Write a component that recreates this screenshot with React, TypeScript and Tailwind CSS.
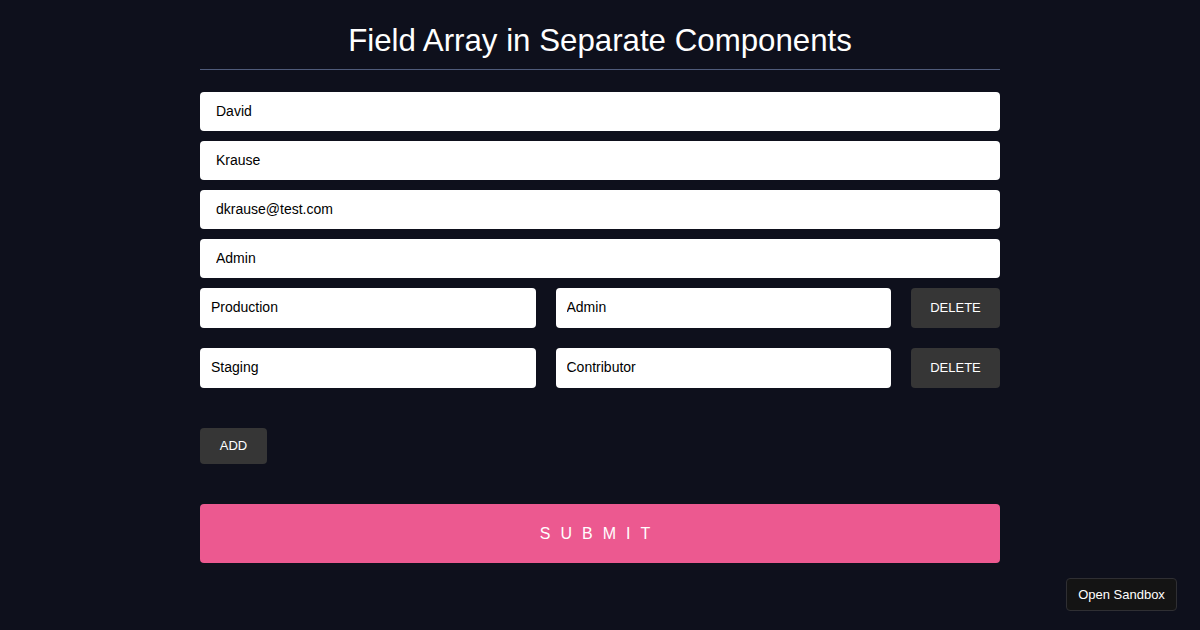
import { useState } from 'react';

type Row = { env: string; role: string };

export default function App() {
  const [rows, setRows] = useState<Row[]>([
    { env: 'Production', role: 'Admin' },
    { env: 'Staging', role: 'Contributor' },
  ]);

  const top = ['David', 'Krause', 'dkrause@test.com', 'Admin'];

  return (
    <div className="min-h-[630px] bg-[#0e101c] font-['Liberation_Sans',Arial,sans-serif]">
      <div className="w-[800px] mx-auto">
        <h1 className="pt-[22px] text-[31.25px] leading-[37px] text-white text-center font-normal">
          Field Array in Separate Components
        </h1>
        <hr className="mt-[10px] border-0 border-t border-[#4f5b7a]" />

        <form className="mt-[22px]" onSubmit={(e) => e.preventDefault()}>
          <div className="flex flex-col gap-[10px]">
            {top.map((v) => (
              <input
                key={v}
                defaultValue={v}
                className="h-[39px] w-full bg-white rounded-[4px] px-4 pb-[2px] text-[14px] text-black outline-none"
              />
            ))}
          </div>

          <div className="mt-[10px] flex flex-col gap-5">
            {rows.map((r, i) => (
              <div key={i} className="flex gap-5">
                <input
                  defaultValue={r.env}
                  className="h-10 flex-1 min-w-0 bg-white rounded-[4px] px-[11px] pb-[2px] text-[14px] text-black outline-none"
                />
                <input
                  defaultValue={r.role}
                  className="h-10 flex-1 min-w-0 bg-white rounded-[4px] px-[11px] pb-[2px] text-[14px] text-black outline-none"
                />
                <button
                  type="button"
                  onClick={() => setRows(rows.filter((_, j) => j !== i))}
                  className="h-10 w-[89px] shrink-0 bg-[#363636] rounded-[4px] text-[13px] text-white"
                >
                  DELETE
                </button>
              </div>
            ))}
          </div>

          <button
            type="button"
            onClick={() => setRows([...rows, { env: '', role: '' }])}
            className="mt-10 h-9 w-[67px] bg-[#363636] rounded-[4px] text-[13px] text-white"
          >
            ADD
          </button>

          <button
            type="submit"
            className="mt-10 block h-[59px] w-full bg-[#ec5990] rounded-[4px] text-[16px] text-white tracking-[10px]"
          >
            SUBMIT
          </button>
        </form>
      </div>

      <button className="fixed right-[23px] bottom-[19px] h-[33px] w-[111px] bg-[#141414] border border-[#2f2f33] rounded-[4px] text-[13px] text-white">
        Open Sandbox
      </button>
    </div>
  );
}
